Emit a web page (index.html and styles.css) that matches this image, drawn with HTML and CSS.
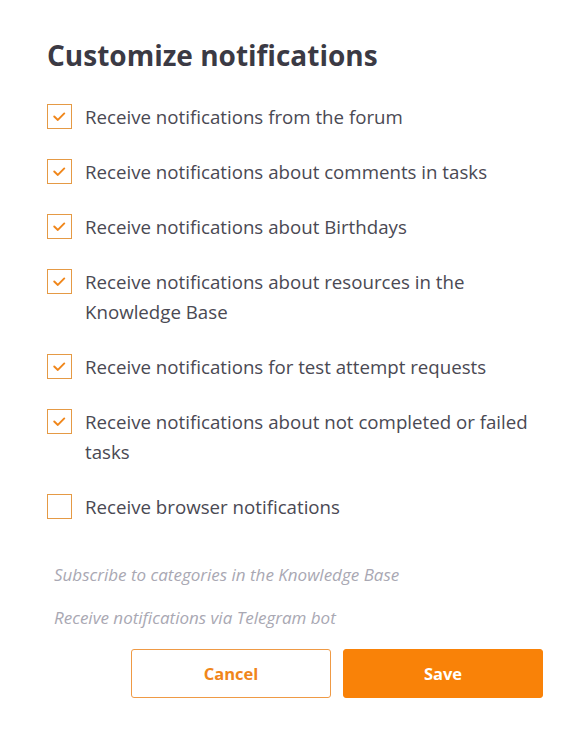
FILE: index.html
```html
<!DOCTYPE html>
<html>
<head>
<meta charset="utf-8">
<link rel="stylesheet" href="styles.css">
</head>
<body>
<div class="panel">
  <h1 class="title">Customize notifications</h1>
  <ul class="options">
    <li class="option"><span class="box checked"><svg viewBox="0 0 24 24" width="24" height="24"><path d="M6.5 12l3.8 3.6L17 8.8" fill="none" stroke="#f0861a" stroke-width="2" stroke-linecap="round" stroke-linejoin="round"/></svg></span><span class="label">Receive notifications from the forum</span></li>
    <li class="option"><span class="box checked"><svg viewBox="0 0 24 24" width="24" height="24"><path d="M6.5 12l3.8 3.6L17 8.8" fill="none" stroke="#f0861a" stroke-width="2" stroke-linecap="round" stroke-linejoin="round"/></svg></span><span class="label">Receive notifications about comments in tasks</span></li>
    <li class="option"><span class="box checked"><svg viewBox="0 0 24 24" width="24" height="24"><path d="M6.5 12l3.8 3.6L17 8.8" fill="none" stroke="#f0861a" stroke-width="2" stroke-linecap="round" stroke-linejoin="round"/></svg></span><span class="label">Receive notifications about Birthdays</span></li>
    <li class="option"><span class="box checked"><svg viewBox="0 0 24 24" width="24" height="24"><path d="M6.5 12l3.8 3.6L17 8.8" fill="none" stroke="#f0861a" stroke-width="2" stroke-linecap="round" stroke-linejoin="round"/></svg></span><span class="label">Receive notifications about resources in the Knowledge Base</span></li>
    <li class="option"><span class="box checked"><svg viewBox="0 0 24 24" width="24" height="24"><path d="M6.5 12l3.8 3.6L17 8.8" fill="none" stroke="#f0861a" stroke-width="2" stroke-linecap="round" stroke-linejoin="round"/></svg></span><span class="label">Receive notifications for test attempt requests</span></li>
    <li class="option"><span class="box checked"><svg viewBox="0 0 24 24" width="24" height="24"><path d="M6.5 12l3.8 3.6L17 8.8" fill="none" stroke="#f0861a" stroke-width="2" stroke-linecap="round" stroke-linejoin="round"/></svg></span><span class="label">Receive notifications about not completed or failed tasks</span></li>
    <li class="option"><span class="box"></span><span class="label">Receive browser notifications</span></li>
  </ul>
  <div class="links">
    <a class="link">Subscribe to categories in the Knowledge Base</a>
    <a class="link">Receive notifications via Telegram bot</a>
  </div>
  <div class="actions">
    <button class="btn btn-cancel">Cancel</button>
    <button class="btn btn-save">Save</button>
  </div>
</div>
</body>
</html>
```
FILE: styles.css
```css
html, body {
  margin: 0;
  padding: 0;
  background: #ffffff;
}
body {
  font-family: "Open Sans", "Noto Sans", sans-serif;
  color: #4a4953;
}
.panel {
  padding: 36px 42px 0 47px;
}
.title {
  margin: 0;
  font-size: 28px;
  font-weight: 700;
  color: #3b3a44;
  line-height: 38px;
  letter-spacing: 0;
}
.options {
  list-style: none;
  margin: 28px 0 0 0;
  padding: 0;
  display: flex;
  flex-direction: column;
  gap: 25px;
}
.option {
  display: flex;
  align-items: flex-start;
  gap: 13px;
}
.box {
  flex: 0 0 auto;
  width: 23px;
  height: 23px;
  border: 1px solid #e59a45;
  margin-top: 2px;
  display: flex;
  align-items: center;
  justify-content: center;
}
.box svg {
  width: 23px;
  height: 23px;
}
.label {
  font-size: 18.7px;
  line-height: 30px;
  color: #4a4953;
  max-width: 458px;
}
.links {
  margin-top: 41px;
  padding-left: 7px;
  display: flex;
  flex-direction: column;
  gap: 20px;
}
.link {
  font-style: italic;
  font-size: 17px;
  line-height: 23px;
  color: #a9a8b3;
}
.actions {
  margin-top: 20px;
  display: flex;
  justify-content: flex-end;
  gap: 12px;
}
.btn {
  width: 200px;
  height: 49px;
  border-radius: 3px;
  font-family: "Open Sans", "Noto Sans", sans-serif;
  font-size: 16.5px;
  font-weight: 700;
  cursor: pointer;
}
.btn-cancel {
  background: #ffffff;
  border: 1px solid #ef9a45;
  color: #f0861a;
}
.btn-save {
  background: #f98208;
  border: 1px solid #f98208;
  color: #ffffff;
}
```
